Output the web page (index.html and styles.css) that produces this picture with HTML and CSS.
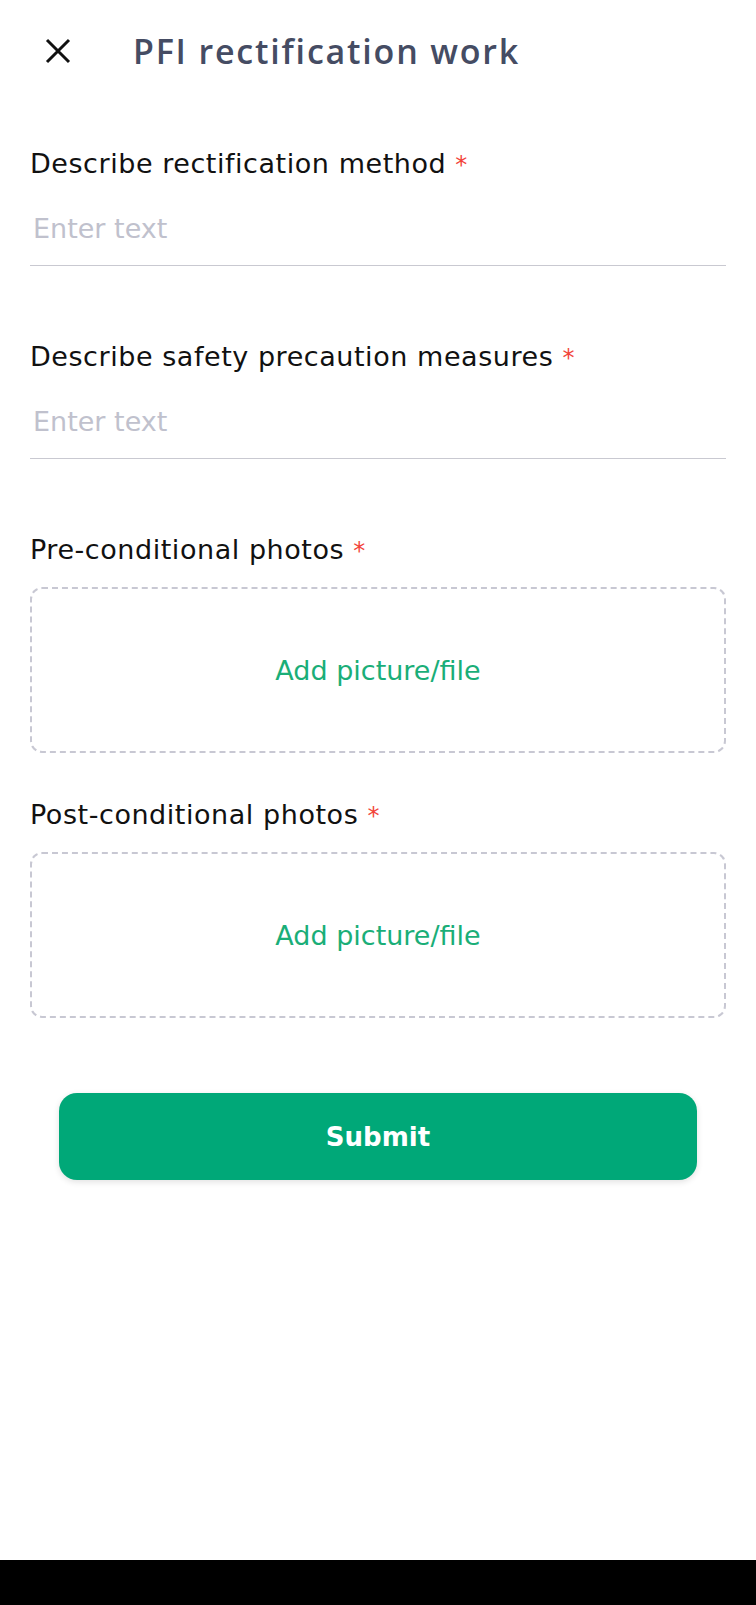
FILE: index.html
```html
<!DOCTYPE html>
<html lang="en">

<head>
  <meta charset="UTF-8">
  <meta name="viewport" content="width=device-width, initial-scale=1.0">
  <title>PFI rectification work</title>

  <link rel="stylesheet" href="styles.css">
</head>

<body>
  <header class="topbar">
    <button class="close-btn" type="button" aria-label="Close">
      <svg width="26" height="26" viewBox="0 0 26 26">
        <path d="M2 2 L24 24 M24 2 L2 24" stroke="#111" stroke-width="3" fill="none" />
      </svg>
    </button>
    <h1 class="title">PFI rectification work</h1>
  </header>

  <form class="form" onsubmit="return false">
    <div class="field">
      <label class="label" for="method">Describe rectification method <span class="req">*</span></label>
      <input class="text-input" type="text" id="method" placeholder="Enter text">
    </div>

    <div class="field">
      <label class="label" for="safety">Describe safety precaution measures <span class="req">*</span></label>
      <input class="text-input" type="text" id="safety" placeholder="Enter text">
    </div>

    <div class="field field-upload">
      <div class="label">Pre-conditional photos <span class="req">*</span></div>
      <div class="upload">Add picture/file</div>
    </div>

    <div class="field field-upload second">
      <div class="label">Post-conditional photos <span class="req">*</span></div>
      <div class="upload">Add picture/file</div>
    </div>

    <button class="submit" type="submit">Submit</button>
  </form>

  <div class="navbar"></div>
</body>

</html>
```

FILE: styles.css
```css
* {
  padding: 0;
  margin: 0;
  box-sizing: border-box;
}

body {
  width: 756px;
  min-height: 1605px;
  display: flex;
  flex-direction: column;
  font-family: "DejaVu Sans", sans-serif;
  background: #fff;
  color: #111;
}

.topbar {
  height: 102px;
  display: flex;
  align-items: center;
  padding-left: 45px;
}

.close-btn {
  width: 26px;
  height: 26px;
  border: none;
  background: none;
  display: flex;
}

.title {
  margin-left: 62px;
  font-family: "Open Sans", sans-serif;
  font-size: 34px;
  font-weight: 600;
  color: #454c63;
  letter-spacing: 1.8px;
}

.form {
  padding: 47px 30px 0;
}

.field {
  margin-bottom: 76px;
}

.field-upload {
  margin-bottom: 47px;
}

.field-upload.second {
  margin-bottom: 75px;
}

.label {
  display: block;
  height: 30px;
  font-size: 27px;
  line-height: 30px;
  letter-spacing: 0.55px;
  color: #111;
}

.req {
  color: #f2433a;
  font-size: 24px;
  line-height: 1;
}

.text-input {
  display: block;
  width: 100%;
  height: 87px;
  border: none;
  border-bottom: 1px solid #c9c9d1;
  padding: 34px 3px 22px;
  font-family: inherit;
  font-size: 27px;
  line-height: 30px;
  outline: none;
}

.text-input::placeholder {
  color: #c0c1cd;
}

.upload {
  margin-top: 22px;
  height: 166px;
  border: 2px dashed #c8c8d3;
  border-radius: 12px;
  display: flex;
  align-items: center;
  justify-content: center;
  font-size: 27px;
  color: #1aae78;
}

.submit {
  display: block;
  width: 638px;
  height: 87px;
  margin: 0 auto;
  border: none;
  border-radius: 18px;
  background: #00a878;
  color: #fff;
  font-family: inherit;
  font-size: 26px;
  font-weight: 700;
  box-shadow: 0 2px 6px rgba(0, 0, 0, 0.12);
}

.navbar {
  margin-top: auto;
  height: 45px;
  background: #000;
}
```
